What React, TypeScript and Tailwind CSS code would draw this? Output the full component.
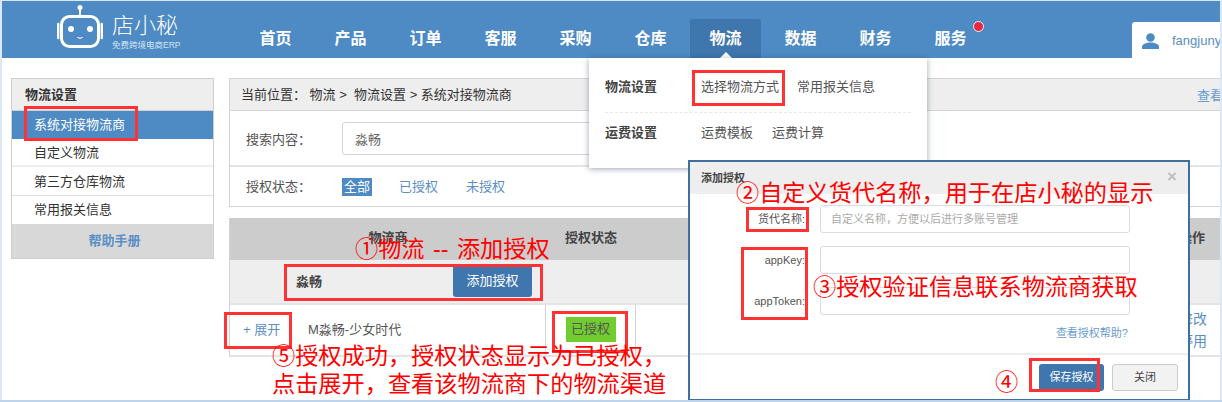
const FONT = "font-['Liberation_Sans','Noto_Sans_CJK_SC',sans-serif]";

function Logo() {
  return (
    <div className="flex items-start w-[236px] h-full pl-[55px]">
      <svg width="46" height="44" viewBox="0 0 46 44" fill="none" className="shrink-0 mt-[4px]">
        <circle cx="23" cy="2.500" r="2.500" fill="#fff" />
        <path d="M23 4v7" stroke="#fff" strokeWidth="2" />
        <rect x="4.500" y="11.500" width="37" height="30" rx="8" stroke="#fff" strokeWidth="3" />
        <path d="M1.200 19v14M44.800 19v14" stroke="#fff" strokeWidth="2.400" strokeLinecap="round" />
        <circle cx="14" cy="24" r="3" fill="#fff" />
        <circle cx="33" cy="24" r="3" fill="#fff" />
        <path d="M20.500 32c1 1.600 4 1.600 5 0" stroke="#fff" strokeWidth="1.200" />
      </svg>
      <div className="ml-[9px] mt-[12px] flex flex-col text-white">
        <span className="text-[22px] leading-[26px] font-light">店小秘</span>
        <span className="text-[8.500px] leading-[10px] whitespace-nowrap text-[#d5e4f3] mt-[1px]">免费跨境电商ERP</span>
      </div>
    </div>
  );
}

function Header() {
  const items = ["首页", "产品", "订单", "客服", "采购", "仓库", "物流", "数据", "财务", "服务"];
  return (
    <header className="h-[57px] bg-[#4e8ac4] flex items-end relative shrink-0">
      <Logo />
      <nav className="flex h-[39px] items-stretch">
        {items.map((t) => (
          <div key={t} className="w-[75px] flex justify-center relative">
            <div className={`w-[71px] flex items-center justify-center text-white font-bold text-[16px] rounded-t-[2px] ${t === "物流" ? "bg-[#3f76ae]" : ""}`}>
              {t}
            </div>
            {t === "物流" && <div className="absolute bottom-0 left-1/2 -ml-[6px] w-0 h-0 border-x-[6px] border-x-transparent border-b-[6px] border-b-white" />}
            {t === "服务" && <div className="absolute top-[2px] right-[4px] w-[11px] h-[11px] rounded-full bg-[#e8283f] border-[1px] border-[#e9eef5]" />}
          </div>
        ))}
      </nav>
      <div className="absolute right-0 bottom-0 w-[88px] h-[36px] bg-white rounded-tl-[3px] flex items-center pl-[10px] overflow-hidden">
        <svg width="17" height="16" viewBox="0 0 17 16" className="shrink-0 mt-[1px]" fill="#4e8ac4">
          <circle cx="8.500" cy="4.500" r="4.300" />
          <path d="M0 16v-2c0-3 4-4.500 8.500-4.500S17 11 17 14v2z" />
        </svg>
        <span className="ml-[13px] mt-[1px] text-[13px] text-[#5a8ebf] whitespace-nowrap">fangjuny</span>
      </div>
    </header>
  );
}

function Sidebar() {
  return (
    <aside className="w-[203px] h-[181px] border border-[#cfcfcf] flex flex-col shrink-0 text-[13px] text-[#333]">
      <div className="h-[32px] bg-[#eeeeee] border-b border-[#cfcfcf] pl-[13px] flex items-center font-bold">物流设置</div>
      <div className="h-[28px] bg-[#4e8ac4] text-white pl-[22px] flex items-center">系统对接物流商</div>
      <div className="h-[28px] border-b-2 border-[#eeeeee] pl-[22px] pt-[2px] flex items-center">自定义物流</div>
      <div className="h-[29px] border-b border-[#dddddd] pl-[22px] pt-[2px] flex items-center">第三方仓库物流</div>
      <div className="h-[28px] pl-[22px] flex items-center">常用报关信息</div>
      <div className="flex-1 bg-[#d8d8d8] text-[#5b8fc5] font-bold flex items-center justify-center pl-[4px]">帮助手册</div>
    </aside>
  );
}

function Main() {
  return (
    <main className="ml-[15px] flex-1 flex flex-col text-[13px] text-[#444]">
      <div className="border border-r-0 border-[#d4d4d4] flex flex-col">
        <div className="h-[32px] bg-[#eeeeee] border-b border-[#d4d4d4] flex items-center pl-[11px] justify-between overflow-hidden">
          <span className="text-[#333]">当前位置：&nbsp;物流 &gt;&nbsp; 物流设置 &gt;&nbsp;系统对接物流商</span>
          <span className="text-[#6a9bcf] whitespace-nowrap mr-[-3px] pt-[2px]">查看</span>
        </div>
        <div className="h-[56px] border-b-2 border-[#e4e4e4] flex items-center pl-[16px]">
          <span className="w-[96px] text-[#555] pt-[3px]">搜索内容：</span>
          <div className="w-[330px] h-[33px] border border-[#d4d4d4] rounded-[3px] flex items-center pl-[12px] pt-[4px] text-[#666]">淼畅</div>
        </div>
        <div className="h-[39px] flex items-center pl-[16px]">
          <span className="w-[96px] text-[#555]">授权状态：</span>
          <span className="w-[30px] h-[18px] bg-[#4e8ac4] text-white flex items-center justify-center">全部</span>
          <span className="ml-[27px] text-[#5b8fc5]">已授权</span>
          <span className="ml-[28px] text-[#5b8fc5]">未授权</span>
        </div>
      </div>
      <div className="mt-[11px] border-l border-[#d4d4d4] flex flex-col">
        <div className="h-[42px] bg-[#cccccc] flex items-center font-bold text-[#444]">
          <div className="w-[316px] text-center pb-[2px]">物流商</div>
          <div className="w-[90px] text-center pb-[2px]">授权状态</div>
          <div className="flex-1 text-right pr-[15px] pb-[2px]">操作</div>
        </div>
        <div className="h-[43px] bg-[#eeeeee] flex items-center pl-[66px]">
          <span className="w-[157px] font-bold text-[#444]">淼畅</span>
          <button className="w-[79px] h-[32px] mb-[1px] bg-[#3f76ae] text-white rounded-[3px] text-[13px]">添加授权</button>
        </div>
        <div className="h-[54px] border-y-2 border-[#e4e4e4] flex items-stretch">
          <div className="w-[316px] border-r border-[#d4d4d4] flex items-center pl-[13px]">
            <span className="text-[#5b8fc5] w-[65px]">+ 展开</span>
            <span className="text-[#555]">M淼畅-少女时代</span>
          </div>
          <div className="w-[90px] border-r border-[#d4d4d4] flex items-center justify-center">
            <span className="w-[50px] h-[25px] bg-[#70cc2f] text-[#555] flex items-center justify-center mb-[2px]">已授权</span>
          </div>
          <div className="flex-1 flex flex-col items-end justify-center pr-[13px] pb-[1px] text-[#5b8fc5] leading-[22px] text-[14px]">
            <span>修改</span>
            <span>停用</span>
          </div>
        </div>
      </div>
    </main>
  );
}

function Dropdown() {
  return (
    <div className="absolute left-[589px] top-[58px] w-[338px] h-[110px] bg-white shadow-[0_1px_6px_rgba(40,60,90,0.45)] text-[13px] text-[#555] px-[16px] z-10">
      <div className="h-[55px] border-b border-dashed border-[#e8e8e8] flex items-center pt-[3px]">
        <span className="font-bold text-[#444] w-[96px]">物流设置</span>
        <span className="w-[96px]">选择物流方式</span>
        <span>常用报关信息</span>
      </div>
      <div className="h-[40px] flex items-center">
        <span className="font-bold text-[#444] w-[96px]">运费设置</span>
        <span className="w-[71px]">运费模板</span>
        <span>运费计算</span>
      </div>
    </div>
  );
}

function Field({ label, placeholder }: { label: string; placeholder?: string }) {
  return (
    <div className="flex items-center h-[28px]">
      <span className="w-[120px] text-right text-[11px] text-[#555] pr-[5px] pt-[1px] shrink-0">{label}</span>
      <div className="ml-[10px] w-[310px] h-[28px] border border-[#dcdcdc] rounded-[3px] flex items-center pl-[10px] text-[11px] text-[#aaaaaa]">{placeholder}</div>
    </div>
  );
}

function Modal() {
  return (
    <div className="absolute left-[688px] top-[160px] w-[502px] h-[241px] bg-white border-2 border-[#3e6f9e] z-20 flex flex-col text-[#444]">
      <div className="h-[32px] bg-[#eeeeee] flex items-center justify-between px-[11px] text-[11px] font-bold shrink-0">
        <span>添加授权</span>
        <span className="text-[#bdbdbd] text-[17px] font-bold leading-none mt-[-4px]">×</span>
      </div>
      <div className="flex-1 flex flex-col pt-[11px] gap-[13px] border-b-2 border-[#eeeeee]">
        <Field label="货代名称:" placeholder="自定义名称，方便以后进行多账号管理" />
        <Field label="appKey:" />
        <Field label="appToken:" />
        <div className="text-[11px] text-[#6a9bcf] text-right pr-[60px] mt-[-3px]">查看授权帮助?</div>
      </div>
      <div className="h-[44px] flex items-center justify-end pr-[10px] gap-[8px] shrink-0">
        <button className="w-[65px] h-[27px] bg-[#3f76ae] text-white text-[11px] rounded-[3px]">保存授权</button>
        <button className="w-[66px] h-[27px] bg-[#f2f2f2] border border-[#cccccc] text-[#444] text-[11px] rounded-[3px]">关闭</button>
      </div>
    </div>
  );
}

function RedBox({ className }: { className: string }) {
  return <div className={`absolute border-[3px] border-[#ff3333] z-30 ${className}`} />;
}

function RedText({ className, children }: { className: string; children: string }) {
  return <div className={`absolute text-[#ff0000] text-[23.200px] leading-[26px] whitespace-nowrap z-30 ${className}`}>{children}</div>;
}

function Annotations() {
  return (
    <>
      <RedBox className="left-[24px] top-[106px] w-[114px] h-[35px]" />
      <RedBox className="left-[692px] top-[70px] w-[93px] h-[36px]" />
      <RedBox className="left-[284px] top-[264px] w-[259px] h-[37px]" />
      <RedBox className="left-[224px] top-[312px] w-[68px] h-[37px]" />
      <RedBox className="left-[552px] top-[311px] w-[76px] h-[42px]" />
      <RedBox className="left-[746px] top-[207px] w-[63px] h-[25px]" />
      <RedBox className="left-[741px] top-[247px] w-[67px] h-[73px]" />
      <RedBox className="left-[1029px] top-[358px] w-[71px] h-[34px]" />
      <RedText className="left-[355px] top-[236px] [word-spacing:2px]">①物流 -- 添加授权</RedText>
      <RedText className="left-[736px] top-[180px]">②自定义货代名称，用于在店小秘的显示</RedText>
      <RedText className="left-[813px] top-[274px]">③授权验证信息联系物流商获取</RedText>
      <RedText className="left-[995px] top-[369px]">④</RedText>
      <RedText className="left-[272px] top-[343px]">⑤授权成功，授权状态显示为已授权，</RedText>
      <RedText className="left-[272px] top-[371px]">点击展开，查看该物流商下的物流渠道</RedText>
    </>
  );
}

export default function App() {
  return (
    <div className={`relative w-[1222px] h-[402px] overflow-hidden bg-[#dbe8f7] pl-[2px] pr-[2px] pt-[1px] border-b-2 border-[#bcd4ec] ${FONT}`}>
      <div className="bg-white h-full flex flex-col">
        <Header />
        <div className="flex pl-[9px] pt-[20px] flex-1">
          <Sidebar />
          <Main />
        </div>
      </div>
      <Dropdown />
      <Modal />
      <Annotations />
    </div>
  );
}
